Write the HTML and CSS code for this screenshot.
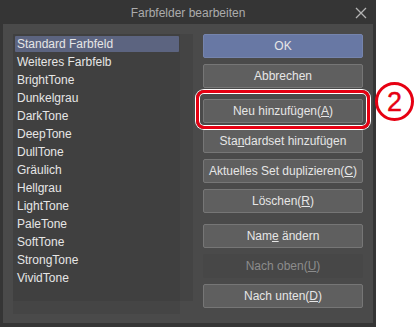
FILE: index.html
```html
<!DOCTYPE html>
<html lang="de">
<head>
  <meta charset="UTF-8">
  <title>Farbfelder bearbeiten</title>
  <link rel="stylesheet" href="styles.css">
</head>
<body>
  <div class="dialog">
    <div class="titlebar">
      <span class="title">Farbfelder bearbeiten</span>
      <span class="close">
        <svg width="12" height="12" viewBox="0 0 12 12"><path d="M1 1L11 11M11 1L1 11" stroke="#b4b4b4" stroke-width="1.3" fill="none"/></svg>
      </span>
    </div>

    <div class="content">
      <div class="listbox">
        <div class="list-main">
          <ul class="items">
            <li class="selected">Standard Farbfeld</li>
            <li>Weiteres Farbfelb</li>
            <li>BrightTone</li>
            <li>Dunkelgrau</li>
            <li>DarkTone</li>
            <li>DeepTone</li>
            <li>DullTone</li>
            <li>Gräulich</li>
            <li>Hellgrau</li>
            <li>LightTone</li>
            <li>PaleTone</li>
            <li>SoftTone</li>
            <li>StrongTone</li>
            <li>VividTone</li>
          </ul>
          <div class="vscroll"></div>
        </div>
        <div class="hscroll">
          <div class="hscroll-track"></div>
          <div class="corner"></div>
        </div>
      </div>

      <div class="buttons">
        <button class="btn primary">OK</button>
        <button class="btn">Abbrechen</button>

        <button class="btn group-start">Neu hinzufügen(<u>A</u>)</button>
        <button class="btn">Sta<u>n</u>dardset hinzufügen</button>
        <button class="btn">Aktuelles Set duplizieren(<u>C</u>)</button>
        <button class="btn">Löschen(<u>R</u>)</button>

        <button class="btn group-start">Nam<u>e</u> ändern</button>
        <button class="btn disabled">Nach oben(<u>U</u>)</button>
        <button class="btn">Nach unten(<u>D</u>)</button>
      </div>
    </div>
  </div>

  <!-- Markierung -->
  <div class="highlight"></div>
  <div class="marker">2</div>
</body>
</html>
```

FILE: styles.css
```css
body {
  margin: 0;
  padding: 0;
  background: #ffffff;
  font-family: 'Liberation Sans', Arial, sans-serif;
  font-size: 12px;
  width: 417px;
  height: 327px;
  overflow: hidden;
  position: relative;
}
.dialog {
  width: 376px;
  height: 327px;
  background: #353535;
  box-sizing: border-box;
  padding: 0 3px 4px 3px;
  display: flex;
  flex-direction: column;
}
.titlebar {
  height: 24px;
  display: flex;
  align-items: center;
  justify-content: center;
  position: relative;
  color: #acacac;
}
.title {
  font-size: 12px;
  padding-top: 1px;
}
.close {
  position: absolute;
  right: 6px;
  top: 7px;
  line-height: 0;
}
.content {
  flex: 1;
  background: #4a4a4a;
  display: flex;
  padding: 10px 10px 0 10px;
  gap: 10px;
}
.listbox {
  width: 180px;
  height: 280px;
  background: #404040;
  display: flex;
  flex-direction: column;
}
.list-main {
  flex: 1;
  display: flex;
}
.items {
  list-style: none;
  margin: 0;
  padding: 2px 1px 0 2px;
  flex: 1;
  color: #e6e6e6;
}
.items li {
  height: 16px;
  line-height: 16px;
  margin-bottom: 2px;
  padding-left: 2px;
  white-space: nowrap;
}
.items li.selected {
  background: #5c6480;
  border-radius: 1px;
}
.vscroll {
  width: 13px;
  background: #444444;
}
.hscroll {
  height: 13px;
  display: flex;
}
.hscroll-track {
  flex: 1;
  background: #454545;
}
.corner {
  width: 13px;
  background: #4a4a4a;
}
.buttons {
  width: 160px;
  display: flex;
  flex-direction: column;
}
.btn {
  height: 24px;
  margin-bottom: 6px;
  padding: 0;
  background: #5f5f5f;
  color: #e6e6e6;
  border: 1px solid #767676;
  border-radius: 2px;
  font-family: 'Liberation Sans', Arial, sans-serif;
  font-size: 12px;
  white-space: nowrap;
}
.btn.primary {
  background: #6878a4;
  border-color: #7584ad;
}
.btn.group-start {
  margin-top: 5px;
}
.btn.disabled {
  background: #474747;
  border-color: #474747;
  color: #8c8c8c;
}
.highlight {
  position: absolute;
  left: 196px;
  top: 90px;
  width: 168px;
  height: 33px;
  border: 3px solid #e60012;
  border-radius: 8px;
  box-shadow: 0 0 0 1px #ffffff, inset 0 0 0 1px #ffffff;
}
.marker {
  position: absolute;
  left: 375px;
  top: 82px;
  width: 33px;
  height: 33px;
  border: 3px solid #e60012;
  border-radius: 50%;
  color: #e60012;
  font-family: 'Liberation Sans', Arial, sans-serif;
  font-size: 27px;
  -webkit-text-stroke: 0.4px #e60012;
  line-height: 34px;
  text-align: center;
}
```
